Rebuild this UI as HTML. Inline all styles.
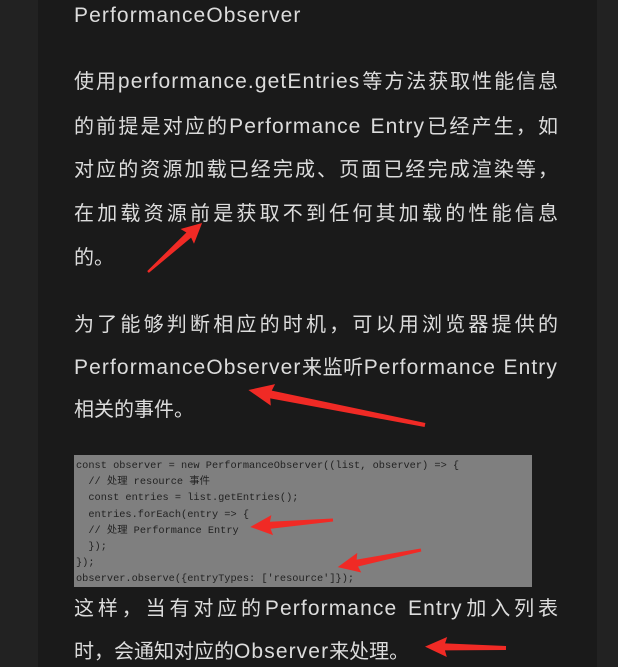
<!DOCTYPE html>
<html><head><meta charset="utf-8"><style>
html,body{margin:0;padding:0;}
body{width:618px;height:667px;background:#222;position:relative;overflow:hidden;font-family:"Liberation Sans","Noto Sans CJK SC",sans-serif;}
#panel{position:absolute;left:38px;top:0;width:559px;height:667px;background:#1a1a1a;}
.l{position:absolute;left:74px;width:484px;font-size:20px;color:#dcdcdc;white-space:nowrap;line-height:24px;}
.j{text-align:justify;text-align-last:justify;}
.e{font-size:21px;letter-spacing:1.1px;}
#img{position:absolute;left:74px;top:455px;width:458px;height:132px;background:#7f7f7f;}
#img div{position:absolute;left:2px;font-family:"Liberation Mono","Noto Sans CJK SC",monospace;font-size:10.3px;color:#222;white-space:pre;line-height:12px;}
svg{position:absolute;left:0;top:0;}
</style></head><body>
<div id="panel"></div>
<div class="l" style="top:4px"><span class="e">PerformanceObserver</span></div>
<div class="l j" style="top:70px">使用<span class="e">performance.getEntries</span>等方法获取性能信息</div>
<div class="l j" style="top:115px">的前提是对应的<span class="e">Performance Entry</span>已经产生，如</div>
<div class="l j" style="top:158px">对应的资源加载已经完成、页面已经完成渲染等，</div>
<div class="l j" style="top:202px">在加载资源前是获取不到任何其加载的性能信息</div>
<div class="l" style="top:246px">的。</div>
<div class="l j" style="top:313px">为了能够判断相应的时机，可以用浏览器提供的</div>
<div class="l j" style="top:356px"><span class="e">PerformanceObserver</span>来监听<span class="e">Performance Entry</span></div>
<div class="l" style="top:398px">相关的事件。</div>
<div id="img">
<div style="top:5px">const observer = new PerformanceObserver((list, observer) =&gt; {</div>
<div style="top:21px">  // 处理 resource 事件</div>
<div style="top:37px">  const entries = list.getEntries();</div>
<div style="top:54px">  entries.forEach(entry =&gt; {</div>
<div style="top:70px">  // 处理 Performance Entry</div>
<div style="top:86px">  });</div>
<div style="top:102px">});</div>
<div style="top:118px">observer.observe({entryTypes: ['resource']});</div>
</div>
<div class="l j" style="top:597px">这样，当有对应的<span class="e">Performance Entry</span>加入列表</div>
<div class="l" style="top:640px">时，会通知对应的<span class="e">Observer</span>来处理。</div>
<svg width="618" height="667">
<g fill="#f02a25">
<g transform="translate(148,272) rotate(-42.2)"><polygon points="0,-1.2 55,-3.5 53,-10 73,0 53,10 55,3.5 0,1.2"/></g>
<g transform="translate(425,425) rotate(191.2)"><polygon points="0,-2 157,-4 155,-11 180,0 155,11 157,4 0,2"/></g>
<g transform="translate(333,520) rotate(175.2)"><polygon points="0,-1.5 63,-3.5 61,-10 83,0 61,10 63,3.5 0,1.5"/></g>
<g transform="translate(421,550) rotate(168.4)"><polygon points="0,-1.5 65,-3.5 63,-10 85,0 63,10 65,3.5 0,1.5"/></g>
<g transform="translate(506,648) rotate(181)"><polygon points="0,-2 61,-3.5 59,-10 81,0 59,10 61,3.5 0,2"/></g>
</g>
</svg>
</body></html>
